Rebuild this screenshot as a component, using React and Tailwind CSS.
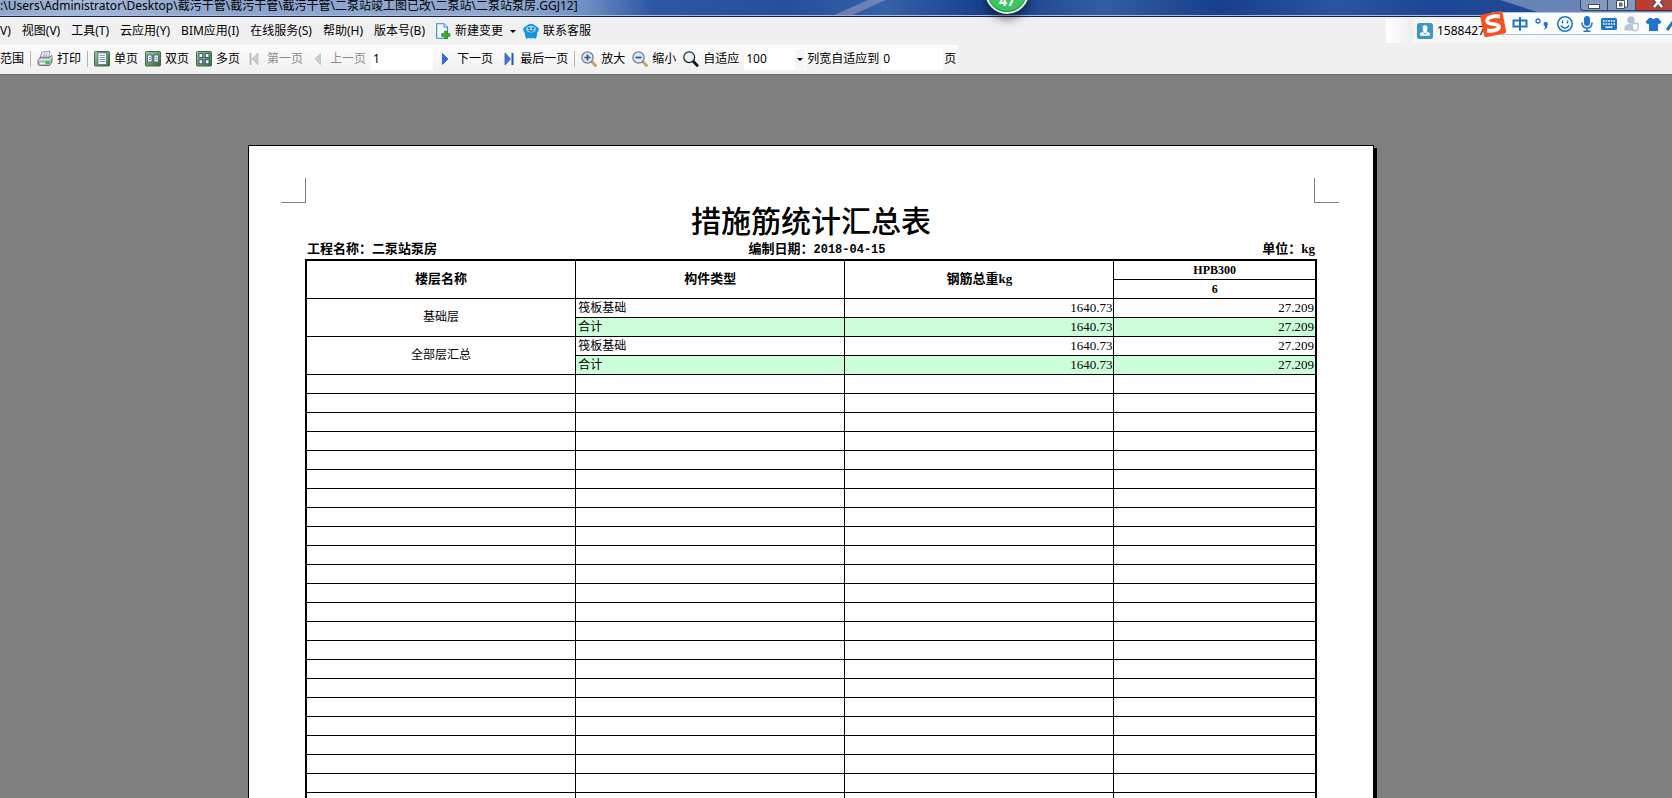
// Report preview window: title bar, menu, preview toolbar and the printed sheet.

const MENU = ["视图(V)", "工具(T)", "云应用(Y)", "BIM应用(I)", "在线服务(S)", "帮助(H)", "版本号(B)"];

const FLOORS = [
  {
    name: "基础层",
    rows: [
      { type: "筏板基础", total: "1640.73", hpb: "27.209" },
      { type: "合计", total: "1640.73", hpb: "27.209", sum: true },
    ],
  },
  {
    name: "全部层汇总",
    rows: [
      { type: "筏板基础", total: "1640.73", hpb: "27.209" },
      { type: "合计", total: "1640.73", hpb: "27.209", sum: true },
    ],
  },
];

const EMPTY_ROWS = 23;

/* ---------- icons ---------- */

const Icon = ({ children, className = "" }) => (
  <svg viewBox="0 0 16 16" className={`w-4 h-4 shrink-0 ${className}`} aria-hidden="true">
    {children}
  </svg>
);

const PrinterIcon = () => (
  <Icon>
    <path d="M5 1 L13 0.5 L11.5 7 H3 Z" fill="#f6f9fd" stroke="#6d7f99" strokeWidth="0.8" />
    <path d="M6 3h5M5.5 4.8h5" stroke="#8da4c8" strokeWidth="0.8" />
    <path d="M1 8.5 L4 6.2 H12.5 L15 4.5 V11 L12.5 14.5 H2.5 L1 13.5 Z" fill="#b5bac2" stroke="#5b6370" strokeWidth="0.9" />
    <path d="M1.2 8.8H12.4L15 5.5" fill="none" stroke="#eceff3" strokeWidth="1" />
    <path d="M3 12.5h5" stroke="#f5f5f5" strokeWidth="1.5" />
    <rect x="8.5" y="10" width="4" height="3" fill="#1fd63a" />
  </Icon>
);

const GreenTile = ({ children }) => (
  <Icon>
    <defs>
      <linearGradient id="tile" x1="0" y1="0" x2="1" y2="1">
        <stop offset="0" stopColor="#a6c9a0" />
        <stop offset="1" stopColor="#2f6b35" />
      </linearGradient>
    </defs>
    <rect x="0.5" y="0.5" width="15" height="14.5" rx="1" fill="url(#tile)" stroke="#3c6f40" />
    {children}
  </Icon>
);

const SinglePageIcon = () => (
  <GreenTile>
    <rect x="4" y="2" width="8.5" height="11.5" fill="#f4f7fd" stroke="#56688c" strokeWidth="0.7" />
    <path d="M5.5 4.5h5.5M5.5 6.5h5.5M5.5 8.5h5.5M5.5 10.5h5.5" stroke="#8a9cc4" strokeWidth="1" />
  </GreenTile>
);

const DoublePageIcon = () => (
  <GreenTile>
    <rect x="2.5" y="4" width="4.5" height="7" fill="#eef3fb" stroke="#44587c" strokeWidth="0.8" />
    <rect x="9" y="4" width="4.5" height="7" fill="#eef3fb" stroke="#44587c" strokeWidth="0.8" />
    <path d="M4 6.5h2M4 8.5h2M10.5 6.5h2M10.5 8.5h2" stroke="#6f86b5" strokeWidth="1" />
  </GreenTile>
);

const MultiPageIcon = () => (
  <GreenTile>
    {[[3, 2.5], [9.3, 2.5], [3, 8.8], [9.3, 8.8]].map(([x, y]) => (
      <rect key={`${x}-${y}`} x={x} y={y} width="3.7" height="4" fill="#e8eefa" stroke="#3b5070" strokeWidth="0.9" />
    ))}
  </GreenTile>
);

const FirstIcon = () => (
  <Icon>
    <path d="M3.5 2v12" stroke="#b9bcc2" strokeWidth="2" />
    <path d="M11 2v12L5 8z" fill="#c9ccd2" stroke="#b4b7bd" strokeWidth="0.6" />
  </Icon>
);

const PrevIcon = () => (
  <Icon>
    <path d="M10.5 2.5v11L5 8z" fill="#c9ccd2" stroke="#b4b7bd" strokeWidth="0.6" />
  </Icon>
);

const NextIcon = () => (
  <Icon>
    <path d="M5.5 2.5v11L11 8z" fill="#2f6ee0" stroke="#1c49b8" strokeWidth="0.7" />
  </Icon>
);

const LastIcon = () => (
  <Icon>
    <path d="M5 2v12l5.5-6z" fill="#3b7ae6" stroke="#1c49b8" strokeWidth="0.7" />
    <path d="M12.5 2v12" stroke="#2455c4" strokeWidth="2" />
  </Icon>
);

const ZoomIcon = ({ plus }) => (
  <Icon>
    <path d="M10.5 10.5l4 4" stroke="#c9a45c" strokeWidth="3" strokeLinecap="round" />
    <circle cx="6.5" cy="6.5" r="5.6" fill="#dbe8f8" stroke="#777f8c" strokeWidth="1.3" />
    <path d={plus ? "M3.5 6.5h6M6.5 3.5v6" : "M3.5 6.5h6"} stroke="#33507f" strokeWidth="1.7" />
  </Icon>
);

const MagnifierIcon = () => (
  <Icon>
    <path d="M10.2 10.2l4 4.3" stroke="#111" strokeWidth="2.8" strokeLinecap="round" />
    <circle cx="6.2" cy="6.2" r="5.4" fill="#e4f4fb" stroke="#222" strokeWidth="1.2" />
    <path d="M3.2 6a3 3 0 0 1 3-3" fill="none" stroke="#fff" strokeWidth="1.2" />
  </Icon>
);

const NewChangeIcon = () => (
  <Icon>
    <path d="M1.7 0.7H9l3.5 3.5V15.3H1.7z" fill="#f4faff" stroke="#3f87c4" strokeWidth="1.1" />
    <path d="M9 0.7v3.5h3.5" fill="#cfe5f7" stroke="#3f87c4" strokeWidth="0.9" />
    <path d="M9.3 8h3v2.5h2.7v3h-2.7V16h-3v-2.5H6.6v-3h2.7z" fill="#3fae1d" stroke="#2b7f12" strokeWidth="0.5" />
  </Icon>
);

const ServiceIcon = () => (
  <Icon>
    <path d="M2.5 3.5Q8-2 13.5 3.5L15.8 5.5Q16 8 14.3 9.5Q14.2 13 12.8 15.8Q10 14.6 8 15.5Q6 14.6 3.2 15.8Q1.8 13 1.7 9.5Q0 8 0.2 5.5z" fill="#1593e0" />
    <ellipse cx="8" cy="6.2" rx="5" ry="3.4" fill="#8fd3f7" />
    <circle cx="6" cy="5.3" r="0.9" fill="#124a80" />
    <circle cx="10" cy="5.3" r="0.9" fill="#124a80" />
    <path d="M5.5 7.3Q8 9.3 10.5 7.3" fill="none" stroke="#124a80" strokeWidth="0.9" />
  </Icon>
);

const UserIcon = () => (
  <Icon>
    <rect width="16" height="16" rx="2.5" fill="#3d97c6" />
    <path d="M5.5 5a2.5 2.7 0 0 1 5 0Q10.5 7.5 9.3 8.3L12.8 10V12.8H3.2V10L6.7 8.3Q5.5 7.5 5.5 5z" fill="#fff" />
    <path d="M6.5 9.5L8 11.2 9.5 9.5" fill="none" stroke="#3d97c6" strokeWidth="1" />
  </Icon>
);

const Caret = () => (
  <svg viewBox="0 0 6 3" className="w-[6px] h-[3px]" aria-hidden="true">
    <path d="M0 0h6L3 3z" fill="#000" />
  </svg>
);

/* ---------- title bar ---------- */

const TitleBar = () => (
  <header className="relative h-[17px] border-b border-[#14254d] bg-[linear-gradient(90deg,#8ea6cb_0%,#a3b8d8_5%,#8ba5cf_14%,#91a9d0_31%,#6f8fc4_35%,#2c57a3_39%,#24509c_47%,#3561a9_53%,#173f89_59%,#335da3_66%,#173f8a_73%,#2c559f_80%,#1c4693_86%,#2a5099_100%)]">
    <div className="h-4 overflow-hidden border-b border-[#a9bbdc]">
      <svg className="absolute inset-0 h-4 w-full" viewBox="0 0 1672 16" preserveAspectRatio="none" aria-hidden="true">
        <path d="M832 16L868 0h18L850 16z" fill="#a9a3c4" opacity="0.5" />
        <path d="M1500 0L1550 16H1672V0z" fill="#a3b3d0" opacity="0.55" />
      </svg>
      <h1 className="relative whitespace-nowrap text-xs leading-[11px]">
        :\Users\Administrator\Desktop\截污干管\截污干管\截污干管\二泵站竣工图已改\二泵站\二泵站泵房.GGJ12]
      </h1>
    </div>
    <div className="absolute right-0 top-0 flex h-[11px]">
      <button type="button" aria-label="最小化" className="flex w-7 justify-center rounded-bl border border-t-0 border-[#33456b] bg-[#8599bd]">
        <svg viewBox="0 0 12 6" className="mt-1 h-[6px] w-3"><rect x="0.5" y="0.5" width="11" height="4" fill="#fff" stroke="#444c5c" /></svg>
      </button>
      <button type="button" aria-label="还原" className="flex w-7 justify-center border-b border-r border-[#33456b] bg-[#8599bd]">
        <svg viewBox="0 0 12 10" className="h-[10px] w-3">
          <path d="M3.5-2h8v9h-8z" fill="#fff" stroke="#444c5c" />
          <path d="M0.5 0.5h8v8h-8z" fill="#fff" stroke="#444c5c" />
          <path d="M3.5 3h2.5v3h-2.5z" fill="#8599bd" stroke="#444c5c" />
        </svg>
      </button>
      <button type="button" aria-label="关闭" className="flex w-9 justify-center border-b border-[#5c2020] bg-[linear-gradient(90deg,#c2392b,#a94a3f)] pl-2">
        <svg viewBox="0 0 12 9" className="h-[9px] w-3">
          <path d="M2-2.5L10 7M10-2.5L2 7" stroke="#444c5c" strokeWidth="4.5" />
          <path d="M2-2.5L10 7M10-2.5L2 7" stroke="#fff" strokeWidth="2.5" />
        </svg>
      </button>
    </div>
    <div className="absolute -top-[30px] left-[985px] z-10 flex h-11 w-11 items-end justify-center rounded-full border-2 border-[#e4eee6] bg-[#3cc65f] pb-[3px] text-sm font-bold text-white shadow-[0_5px_10px_rgba(0,0,0,0.5),inset_0_-1px_1px_#14803a]">
      <span className="leading-4">47</span>
    </div>
  </header>
);

/* ---------- input method bar ---------- */

const ImeBar = () => (
  <div className="absolute right-0 top-3 z-20 flex h-[23px] w-[180px] items-center border-y border-[#a9c9dc] bg-[#fbfdff] text-[#1f76c8]">
    <svg viewBox="0 0 28 28" className="-ml-[13px] h-7 w-7 shrink-0" aria-hidden="true">
      <path d="M3 4.5Q1 5 1.3 7L5 25.5Q5.5 27.5 8 27L25 23.5Q27.5 23 27 20.5L23.5 2.5Q23 0.5 21 1z" fill="#f4511e" />
      <path d="M21 6.5Q14 5.5 9.5 8Q6 12 11 13.5L17 14.5Q22 16 19 19Q14.5 21.5 8 20.5" fill="none" stroke="#fff" strokeWidth="3.8" />
    </svg>
    <svg viewBox="0 0 165 20" className="h-5 w-[165px] shrink-0" aria-hidden="true">
      <path d="M6.5 6.5h13v6h-13zM13 3v14" fill="none" stroke="currentColor" strokeWidth="2" />
      <circle cx="31" cy="7" r="2" fill="none" stroke="currentColor" strokeWidth="1.3" />
      <path d="M36.5 10a2.2 2.2 0 1 1 4 1.3Q40.5 14.5 37 16Q38.3 14 38 12.3Q36.5 11.5 36.5 10z" fill="currentColor" />
      <circle cx="58" cy="10" r="7.2" fill="none" stroke="currentColor" strokeWidth="1.6" />
      <path d="M55.5 6.5v3M60.5 6.5v3M53.8 11.5Q58 17 62.2 11.5" fill="none" stroke="currentColor" strokeWidth="1.5" />
      <rect x="77" y="2" width="6" height="10" rx="3" fill="currentColor" />
      <path d="M75 8.5Q75 14 80 14Q85 14 85 8.5M80 14v3.5M76.5 17.2h7" fill="none" stroke="currentColor" strokeWidth="1.6" />
      <rect x="94" y="4" width="16" height="12" rx="1.5" fill="currentColor" />
      <path d="M96 7h12M96 10h12" stroke="#fff" strokeWidth="1.4" strokeDasharray="1.6 1" />
      <path d="M98.5 13.2h7" stroke="#fff" strokeWidth="1.4" />
      <circle cx="124" cy="6" r="3.7" fill="#b5c2d8" />
      <path d="M117.5 16.5V13Q118 10 124 10Q128 10 129 12V16.5z" fill="#b5c2d8" />
      <path d="M125.5 9.5h5.5v6l-2.7 1.5-2.8-1.5z" fill="#fff" stroke="#b5c2d8" strokeWidth="1.4" />
      <path d="M142 4H144.5Q146.5 6 148.5 4H151L154.5 8 152 10.5 151 9.5V17H142V9.5L141 10.5 138.5 8z" fill="currentColor" />
      <path d="M160 16L166 8" stroke="currentColor" strokeWidth="3" />
    </svg>
  </div>
);

/* ---------- menu and toolbar ---------- */

const MenuBar = () => (
  <nav className="flex h-7 items-center whitespace-nowrap">
    <div className="flex items-center gap-[11px]">
      <button type="button">V)</button>
      {MENU.map((label) => (
        <button key={label} type="button">{label}</button>
      ))}
    </div>
    <button type="button" className="ml-[10px] flex items-center gap-1">
      <NewChangeIcon />
      新建变更
    </button>
    <button type="button" aria-label="新建变更选项" className="ml-[7px]"><Caret /></button>
    <button type="button" className="ml-[7px] flex items-center gap-1">
      <ServiceIcon />
      联系客服
    </button>
    <div className="ml-auto flex h-6 w-[286px] items-center">
      <div className="h-full w-6 bg-gradient-to-r from-white to-[#f0f0f0]" />
      <button type="button" className="ml-[3px] flex h-full flex-1 items-center gap-1 bg-[#f6f6f6] pl-1">
        <UserIcon />
        1588427
      </button>
    </div>
  </nav>
);

const ToolButton = ({ icon, label, disabled }) => (
  <button type="button" disabled={disabled} className="flex items-center gap-1 disabled:text-[#8d8d8d]">
    {icon}
    {label}
  </button>
);

const Divider = () => <span className="-mx-px h-4 w-px bg-[#b4b4b4]" />;

const Toolbar = () => (
  <div className="flex h-[30px] items-start border-b border-[#6a6a6a] whitespace-nowrap">
    <div className="flex h-7 items-center gap-[7px] bg-gradient-to-b from-[#fcfcfc] to-[#f0f0f0] pr-[2px]">
      <button type="button">范围</button>
      <Divider />
      <ToolButton icon={<PrinterIcon />} label="打印" />
      <Divider />
      <ToolButton icon={<SinglePageIcon />} label="单页" />
      <ToolButton icon={<DoublePageIcon />} label="双页" />
      <ToolButton icon={<MultiPageIcon />} label="多页" />
      <ToolButton icon={<FirstIcon />} label="第一页" disabled />
      <ToolButton icon={<PrevIcon />} label="上一页" disabled />
      <div className="flex items-center gap-1">
        <input aria-label="页码" defaultValue="1" className="-ml-[2px] h-[22px] w-[62px] bg-white px-[2px] pb-[2px]" />
        <ToolButton icon={<NextIcon />} label="下一页" />
      </div>
      <ToolButton icon={<LastIcon />} label="最后一页" />
      <Divider />
      <ToolButton icon={<ZoomIcon plus />} label="放大" />
      <ToolButton icon={<ZoomIcon />} label="缩小" />
      <ToolButton icon={<MagnifierIcon />} label="自适应" />
      <div className="-ml-[2px] flex items-center">
        <input aria-label="缩放比例" defaultValue="100" className="h-[22px] w-[50px] bg-white px-[2px] pb-[2px]" />
        <button type="button" aria-label="选择缩放比例" className="flex h-[22px] w-3 items-center justify-center border border-white bg-[#f5f5f5]">
          <Caret />
        </button>
        <label htmlFor="fit-pages" className="ml-px mr-[2px]">列宽自适应到</label>
        <input id="fit-pages" defaultValue="0" className="mr-px h-[22px] w-[62px] bg-white px-[2px] pb-[2px]" />
        <span>页</span>
      </div>
    </div>
  </div>
);

/* ---------- sheet ---------- */

const CELL = "h-[19px] border-b border-r border-black p-0 leading-[18px]";
const LAST_CELL = "h-[19px] border-b border-black p-0 leading-[18px]";

const SummaryTable = () => (
  <table className="w-full table-fixed border-separate border-spacing-0 border-2 border-black text-xs">
    <colgroup>
      <col className="w-[26.7%]" />
      <col className="w-[26.7%]" />
      <col className="w-[26.7%]" />
      <col />
    </colgroup>
    <thead>
      <tr>
        <th rowSpan={2} className={`${CELL} pb-[2px] text-[13px]`}>楼层名称</th>
        <th rowSpan={2} className={`${CELL} pb-[2px] text-[13px]`}>构件类型</th>
        <th rowSpan={2} className={`${CELL} pb-[2px] text-[13px]`}>钢筋总重kg</th>
        <th className={LAST_CELL}>HPB300</th>
      </tr>
      <tr>
        <th className={LAST_CELL}>6</th>
      </tr>
    </thead>
    <tbody>
      {FLOORS.map((floor) =>
        floor.rows.map((row, i) => (
          <tr key={`${floor.name}-${row.type}`}>
            {i === 0 && (
              <td rowSpan={floor.rows.length} className={`${CELL} pb-[2px] text-center`}>{floor.name}</td>
            )}
            <td className={`${CELL} pl-[2px] ${row.sum ? "bg-[#ccffd9]" : ""}`}>{row.type}</td>
            <td className={`${CELL} pr-px text-right text-[13px] ${row.sum ? "bg-[#ccffd9]" : ""}`}>{row.total}</td>
            <td className={`${LAST_CELL} pr-px text-right text-[13px] ${row.sum ? "bg-[#ccffd9]" : ""}`}>{row.hpb}</td>
          </tr>
        ))
      )}
      {Array.from({ length: EMPTY_ROWS }).map((_, i) => (
        <tr key={i}>
          <td className={CELL} />
          <td className={CELL} />
          <td className={CELL} />
          <td className={LAST_CELL} />
        </tr>
      ))}
    </tbody>
  </table>
);

const Sheet = () => (
  <section className="min-h-[700px] border border-black bg-white pt-8 font-['Liberation_Serif','Noto_Sans_CJK_SC',serif] shadow-[3px_3px_0_#000]">
    <div className="flex justify-between pl-8 pr-[34px]">
      <span className="h-[25px] w-[25px] border-b border-r border-[#808080]" />
      <span className="h-[25px] w-[25px] border-b border-l border-[#808080]" />
    </div>
    <div className="px-14">
      <h2 className="text-center text-[30px] font-medium leading-[38px]">措施筋统计汇总表</h2>
      <div className="grid h-[18px] grid-cols-3 px-[2px] text-[13px] font-bold leading-4">
        <span>工程名称：二泵站泵房</span>
        <span className="pl-3 text-center">
          编制日期：<span className="font-['Liberation_Mono',monospace] text-xs leading-4">2018-04-15</span>
        </span>
        <span className="text-right">单位：kg</span>
      </div>
      <SummaryTable />
    </div>
  </section>
);

export default function App() {
  return (
    <div className="relative flex h-screen flex-col overflow-hidden bg-[#f0f0f0] font-['Noto_Sans','Noto_Sans_CJK_SC',sans-serif] text-xs leading-4 text-black">
      <TitleBar />
      <ImeBar />
      <MenuBar />
      <Toolbar />
      <main className="flex-1 overflow-hidden bg-[#808080] pl-[248px] pr-[298px] pt-[70px]">
        <Sheet />
      </main>
    </div>
  );
}
